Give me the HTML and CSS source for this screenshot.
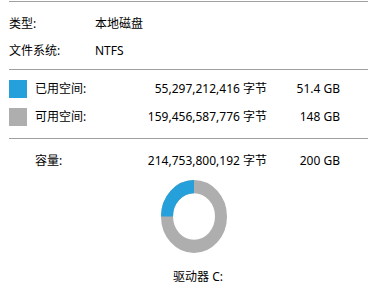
FILE: index.html
```html
<!DOCTYPE html>
<html lang="zh-CN">
  <head>
    <meta charset="UTF-8" />
    <title>本地磁盘 (C:) 属性</title>
    <link rel="stylesheet" href="styles.css">
  </head>
  <body>
    <div class="panel">
      <div class="divider"></div>

      <div class="info">
        <div class="info-row">
          <span class="info-label">类型:</span>
          <span>本地磁盘</span>
        </div>
        <div class="info-row">
          <span class="info-label">文件系统:</span>
          <span>NTFS</span>
        </div>
      </div>

      <div class="divider divider-mid"></div>

      <div class="space">
        <div class="space-row">
          <span class="swatch used"></span>
          <span class="space-label">已用空间:</span>
          <span class="bytes">55,297,212,416 字节</span>
          <span class="size">51.4 GB</span>
        </div>
        <div class="space-row">
          <span class="swatch free"></span>
          <span class="space-label">可用空间:</span>
          <span class="bytes">159,456,587,776 字节</span>
          <span class="size">148 GB</span>
        </div>
      </div>

      <div class="divider divider-low"></div>

      <div class="space-row capacity">
        <span class="swatch blank"></span>
        <span class="space-label">容量:</span>
        <span class="bytes">214,753,800,192 字节</span>
        <span class="size">200 GB</span>
      </div>

      <div class="chart">
        <svg class="donut" viewBox="0 0 100 100" preserveAspectRatio="none">
          <circle cx="50" cy="50" r="40.9" fill="none" stroke="#aeaeae" stroke-width="18.2" />
          <path d="M50 9.1 A40.9 40.9 0 0 0 9.1 50" fill="none" stroke="#26a0da" stroke-width="18.2" />
        </svg>
        <div class="drive">驱动器 C:</div>
      </div>
    </div>
  </body>
</html>
```

FILE: styles.css
```css
html, body {
  margin: 0;
  padding: 0;
  background: #ffffff;
}
body {
  font-family: "Noto Sans", "Noto Sans CJK SC", sans-serif;
  font-size: 12px;
  color: #000000;
  width: 370px;
  height: 292px;
  overflow: hidden;
}
.panel {
  padding-left: 9px;
  width: 359px;
}
.divider {
  height: 1px;
  background: #a0a0a0;
  margin-top: 1px;
}
.divider-mid {
  margin-top: 5px;
}
.divider-low {
  margin-top: 7px;
}
.info {
  padding-top: 8px;
}
.info-row {
  display: flex;
  align-items: center;
  height: 27px;
  line-height: 16px;
}
.info-label {
  width: 86px;
}
.space {
  padding-top: 5px;
}
.space-row {
  display: flex;
  align-items: center;
  height: 28px;
  line-height: 16px;
}
.capacity {
  margin-top: 8px;
}
.swatch {
  width: 18px;
  height: 18px;
  margin-right: 8px;
  flex: 0 0 18px;
}
.swatch.used {
  background: #26a0da;
}
.swatch.free {
  background: #aeaeae;
}
.space-label {
  width: 80px;
}
.bytes {
  width: 152px;
  text-align: right;
}
.size {
  width: 73px;
  text-align: right;
}
.chart {
  display: flex;
  flex-direction: column;
  align-items: center;
  width: 120px;
  margin-left: 125px;
  margin-top: 5px;
}
.donut {
  display: block;
  width: 66px;
  height: 73px;
}
.drive {
  margin-top: 16px;
  padding-left: 8px;
  line-height: 16px;
}
```
